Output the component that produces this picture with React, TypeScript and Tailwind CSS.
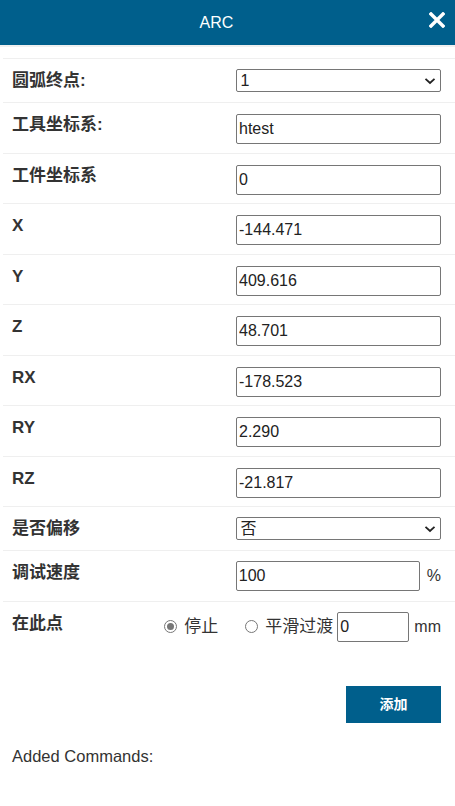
import React from "react";

const font = "font-['Liberation_Sans','Noto_Sans_CJK_SC',sans-serif]";

const Chevron = () => (
  <svg
    width="12"
    height="8"
    viewBox="0 0 12 8"
    className="pointer-events-none absolute right-[5px] top-1/2 -translate-y-1/2"
  >
    <path d="M1.5 1.8 L6 6 L10.5 1.8" fill="none" stroke="#222" strokeWidth="1.8" />
  </svg>
);

const SelectBox = ({ value }: { value: string }) => (
  <div className="relative w-[205px]">
    <select
      defaultValue={value}
      className={`${font} block h-[23px] w-full appearance-none rounded-[2px] border border-[#767676] bg-white pl-[3px] text-[16px] leading-[21px] text-[#222] outline-none`}
    >
      <option value={value}>{value}</option>
    </select>
    <Chevron />
  </div>
);

const TextBox = ({ value, w = "w-[205px]" }: { value: string; w?: string }) => (
  <input
    defaultValue={value}
    className={`${font} ${w} h-[30px] rounded-[2px] border border-[#767676] bg-white pl-[2px] pr-[3px] text-[16px] text-[#222] outline-none`}
  />
);

const SelectRow = ({ label, value }: { label: string; value: string }) => (
  <div className="flex h-[44px] items-center border-t border-[#efefef] pl-[9px] pr-[14px]">
    <div className="w-[225px] text-[17px] font-bold text-[#333]">{label}</div>
    <SelectBox value={value} />
  </div>
);

const InputRow = ({ label, value }: { label: string; value: string }) => (
  <div className="flex h-[50.5px] items-start border-t border-[#efefef] pl-[9px] pr-[14px]">
    <div className="mt-[10px] w-[225px] text-[17px] font-bold leading-[24px] text-[#333]">{label}</div>
    <div className="mt-[11px]">
      <TextBox value={value} />
    </div>
  </div>
);

const Radio = ({ checked }: { checked?: boolean }) => (
  <span className="flex h-[13px] w-[13px] items-center justify-center rounded-full border border-[#777] bg-white">
    {checked && <span className="h-[7px] w-[7px] rounded-full bg-[#777]" />}
  </span>
);

export default function App() {
  const coords: [string, string][] = [
    ["X", "-144.471"],
    ["Y", "409.616"],
    ["Z", "48.701"],
    ["RX", "-178.523"],
    ["RY", "2.290"],
    ["RZ", "-21.817"],
  ];

  return (
    <div className={`${font} min-h-[806px] w-[455px] bg-white text-[#333]`}>
      <div className="relative flex h-[45px] items-center justify-center bg-[#005f8c] pr-[22px] text-[16px] text-white">
        ARC
        <svg width="16" height="16" viewBox="0 0 16 16" className="absolute right-[10px] top-[12px]">
          <path d="M2 2 L14 14 M14 2 L2 14" stroke="white" strokeWidth="3.4" strokeLinecap="square" />
        </svg>
      </div>
      <div className="h-[2px] bg-[#f0f0f0]" />

      <div className="pl-[3px] pt-[11px]">
        <SelectRow label="圆弧终点:" value="1" />
        <InputRow label="工具坐标系:" value="htest" />
        <InputRow label="工件坐标系" value="0" />
        {coords.map(([l, v]) => (
          <InputRow key={l} label={l} value={v} />
        ))}
        <SelectRow label="是否偏移" value="否" />

        <div className="flex h-[50.5px] items-start border-t border-[#efefef] pl-[9px] pr-[14px]">
          <div className="mt-[10px] w-[226px] text-[17px] font-bold leading-[24px] text-[#333]">调试速度</div>
          <div className="mt-[10px] flex items-center">
            <TextBox value="100" w="w-[184px]" />
            <span className="ml-[7px] text-[16px] text-[#333]">%</span>
          </div>
        </div>

        <div className="flex h-[50px] items-start border-t border-[#efefef] pl-[9px] pr-[14px]">
          <div className="mt-[10px] flex-1 text-[17px] font-bold leading-[24px] text-[#333]">在此点</div>
          <div className="mt-[10px] flex items-center text-[17px] text-[#333]">
            <Radio checked />
            <span className="ml-[7px]">停止</span>
            <span className="ml-[27px]">
              <Radio />
            </span>
            <span className="ml-[7px]">平滑过渡</span>
            <span className="ml-[4px]">
              <TextBox value="0" w="w-[72px]" />
            </span>
            <span className="ml-[5px] text-[16px]">mm</span>
          </div>
        </div>
      </div>

      <div className="mt-[35px] flex justify-end pr-[14px]">
        <button className="h-[37px] w-[95px] bg-[#005f8c] text-[14px] font-bold text-white">添加</button>
      </div>

      <div className="mt-[21px] pl-[12px] text-[16.5px] text-[#333]">Added Commands:</div>
    </div>
  );
}
